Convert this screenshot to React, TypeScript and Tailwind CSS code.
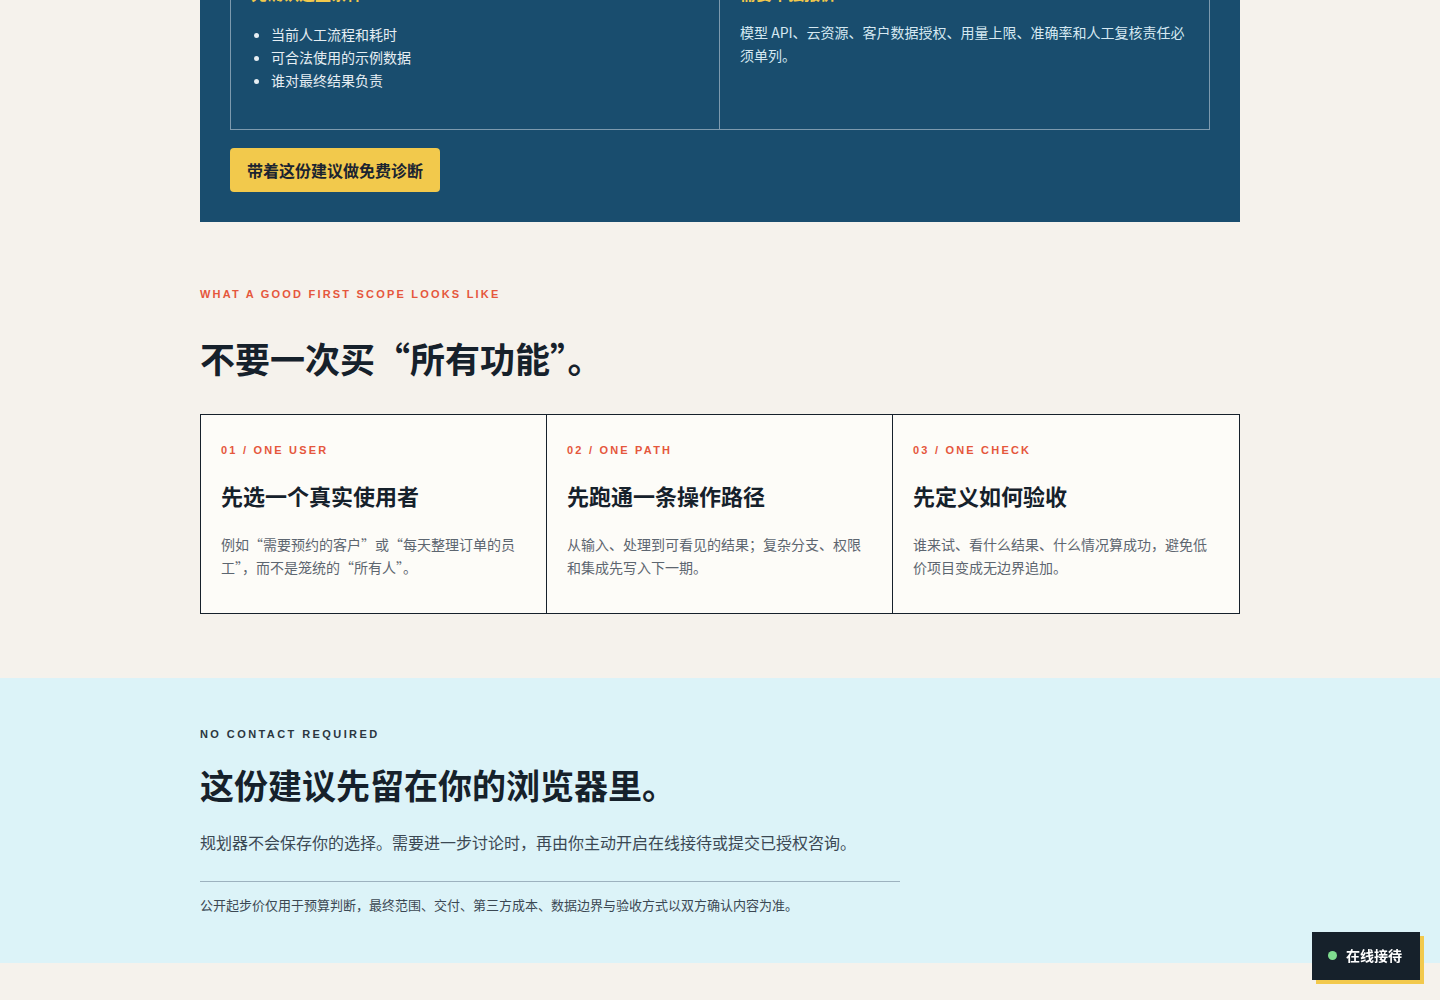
import React from "react";

const FONT = { fontFamily: '"Noto Sans CJK SC", "Liberation Sans", sans-serif' };
const LATIN = { fontFamily: '"Liberation Sans", "Noto Sans CJK SC", sans-serif' };

function Card({ label, title, desc, last }: { label: string; title: string; desc: string; last?: boolean }) {
  return (
    <div className={`px-5 pt-[28px] pb-[34px] ${last ? "" : "border-r border-[#16212b]"}`}>
      <div style={LATIN} className="text-[11px] font-bold tracking-[0.2em] text-[#e5573c] leading-[14px]">{label}</div>
      <h3 className="mt-[23px] text-[22px] font-bold leading-[30px] text-[#16212b]">{title}</h3>
      <p className="mt-[23px] text-[14px] leading-[23px] text-[#5d6670]">{desc}</p>
    </div>
  );
}

export default function App() {
  return (
    <div style={FONT} className="min-h-[1000px] bg-[#f5f2ec] overflow-hidden">
      {/* Dark section (scrolled partially off the top) */}
      <section className="mx-auto w-[1040px] bg-[#194d6e] px-[30px] pt-[30px] pb-[30px] -mt-[73px]">
        <div className="grid grid-cols-2 border border-[#7d9aae]">
          <div className="border-r border-[#7d9aae] px-5 pt-[22px] pb-[37px]">
            <h4 className="text-[16px] font-bold leading-[27px] text-[#f2c94c]">先确认这些条件</h4>
            <ul className="mt-[16px] list-disc pl-5 text-[14px] leading-[23px] text-[#e6eef3] marker:text-[#e6eef3]">
              <li>当前人工流程和耗时</li>
              <li>可合法使用的示例数据</li>
              <li>谁对最终结果负责</li>
            </ul>
          </div>
          <div className="px-5 pt-[22px] pb-[37px]">
            <h4 className="text-[16px] font-bold leading-[27px] text-[#f2c94c]">需要单独报价</h4>
            <p className="mt-[14px] text-[14px] leading-[23px] text-[#d5e8f1]">
              模型 API、云资源、客户数据授权、用量上限、准确率和人工复核责任必须单列。
            </p>
          </div>
        </div>
        <button className="mt-[18px] h-[44px] rounded-[4px] bg-[#f2c94c] px-[17px] text-[16px] font-bold text-[#1b2430]">
          带着这份建议做免费诊断
        </button>
      </section>

      {/* Scope section */}
      <section className="mx-auto w-[1040px] pt-[65px] pb-[64px]">
        <div style={LATIN} className="text-[11px] font-bold tracking-[0.2em] text-[#e5573c] leading-[14px]">
          WHAT A GOOD FIRST SCOPE LOOKS LIKE
        </div>
        <h2 className="mt-[35px] text-[35px] font-bold leading-[44px] text-[#16212b]">不要一次买“所有功能”。</h2>
        <div className="mt-[34px] grid grid-cols-3 border border-[#16212b] bg-[#fdfcf8]">
          <Card
            label="01 / ONE USER"
            title="先选一个真实使用者"
            desc="例如“需要预约的客户”或“每天整理订单的员工”，而不是笼统的“所有人”。"
          />
          <Card
            label="02 / ONE PATH"
            title="先跑通一条操作路径"
            desc="从输入、处理到可看见的结果；复杂分支、权限和集成先写入下一期。"
          />
          <Card
            label="03 / ONE CHECK"
            title="先定义如何验收"
            desc="谁来试、看什么结果、什么情况算成功，避免低价项目变成无边界追加。"
            last
          />
        </div>
      </section>

      {/* Light blue section */}
      <section className="bg-[#dcf3f8]">
        <div className="mx-auto w-[1040px] pt-[49px] pb-[48px]">
          <div style={LATIN} className="text-[11px] font-bold tracking-[0.22em] text-[#2b3640] leading-[14px]">NO CONTACT REQUIRED</div>
          <h2 className="mt-[22px] text-[34px] font-bold leading-[44px] text-[#16212b]">这份建议先留在你的浏览器里。</h2>
          <p className="mt-[22px] text-[16px] leading-[26px] text-[#3b4853]">
            规划器不会保存你的选择。需要进一步讨论时，再由你主动开启在线接待或提交已授权咨询。
          </p>
          <div className="mt-[26px] w-[700px] border-t border-[#9db2bf] pt-[13px] text-[13px] leading-[20px] text-[#3b4853]">
            公开起步价仅用于预算判断，最终范围、交付、第三方成本、数据边界与验收方式以双方确认内容为准。
          </div>
        </div>
      </section>

      {/* Floating chat button */}
      <button className="fixed left-[1312px] top-[932px] flex h-[48px] w-[108px] items-center gap-[9px] bg-[#16212b] pl-[16px] pb-[1px] text-[14px] font-bold text-white shadow-[4px_4px_0_#f2c94c]">
        <span className="h-[9px] w-[9px] rounded-full bg-[#7fdc8f]" />
        在线接待
      </button>
    </div>
  );
}
